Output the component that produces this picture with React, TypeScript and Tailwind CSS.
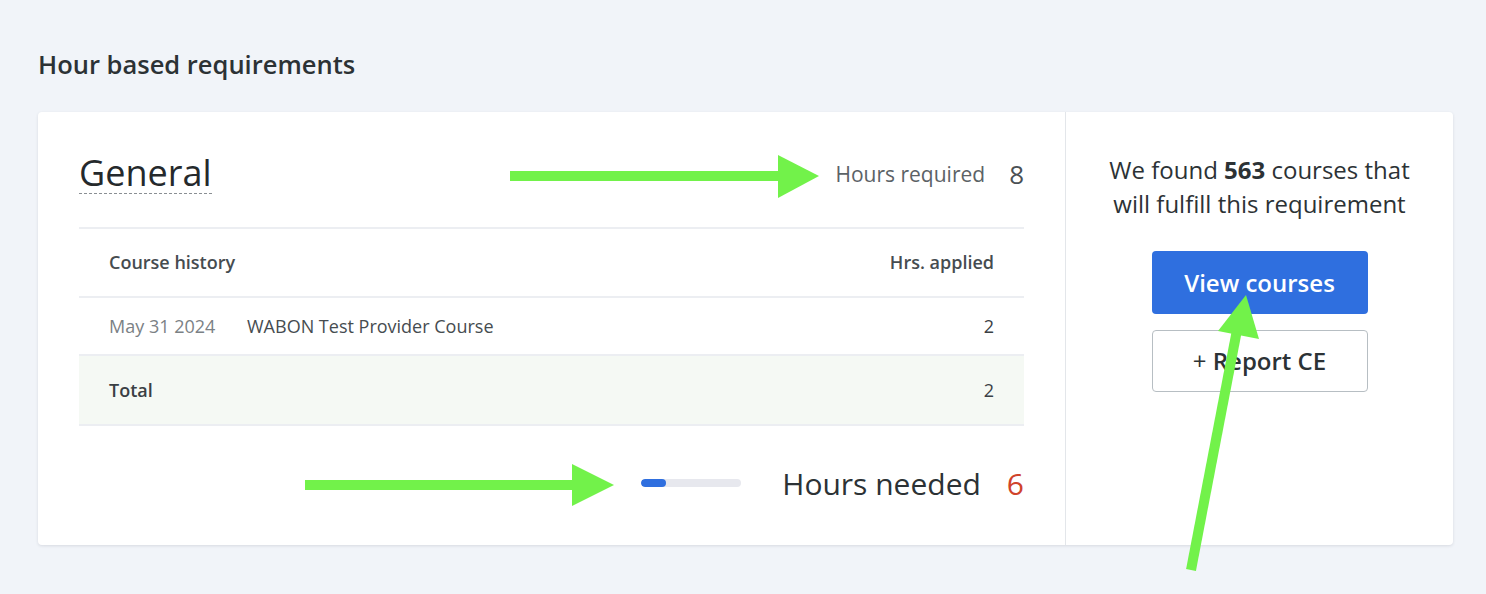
import React from "react";

const rows = [{ date: "May 31 2024", title: "WABON Test Provider Course", hours: 2 }];

function Arrows() {
  const green = "#72f24a";
  return (
    <svg
      className="pointer-events-none absolute left-0 top-0"
      width={1486}
      height={594}
      viewBox="0 0 1486 594"
    >
      <rect x={510} y={171} width={270} height={10} fill={green} />
      <polygon points="778,155 819,176 778,198" fill={green} />
      <rect x={305} y={480} width={269} height={10} fill={green} />
      <polygon points="572,464 614,485 572,506" fill={green} />
      <line x1={1191} y1={570} x2={1237} y2={330} stroke={green} strokeWidth={10} />
      <polygon points="1246,295 1218,331 1259,339" fill={green} />
    </svg>
  );
}

export default function App() {
  const required = 8;
  const applied = rows.reduce((sum, r) => sum + r.hours, 0);
  const needed = required - applied;

  return (
    <div
      className="relative h-[594px] w-[1486px] overflow-hidden bg-[#f1f4f9] px-[38px] pt-[46px]"
      style={{ fontFamily: '"Open Sans", sans-serif' }}
    >
      <h2 className="text-[25.5px] leading-[36px] font-semibold text-[#2c3235]">Hour based requirements</h2>

      <section className="mt-[30px] flex h-[433px] w-[1415px] rounded-[4px] bg-white shadow-[0_1px_3px_rgba(30,40,60,0.12)]">
        <div className="w-[1028px] border-r border-[#e3e6ea] px-[41px] pt-[40px]">
          <header className="flex h-[75px] items-start justify-between">
            <h3 className="border-b-[1.5px] border-dashed border-[#8a8f93] text-[36px] leading-[41px] text-[#25292c]">
              General
            </h3>
            <div className="flex items-center gap-[24px] pt-[3px]">
              <span className="text-[21px] text-[#5c6266]">Hours required</span>
              <span className="text-[26px] text-[#4a5054]">{required}</span>
            </div>
          </header>

          <div className="border-t-2 border-[#eceef2]">
            <div className="flex h-[67px] items-center justify-between px-[30px] text-[18px] font-semibold text-[#464c50]">
              <span>Course history</span>
              <span>Hrs. applied</span>
            </div>
            {rows.map((r) => (
              <div
                key={r.title}
                className="flex h-[58px] items-center border-t-2 border-[#eceef2] px-[30px] text-[18px]"
              >
                <span className="w-[138px] text-[#7b8185]">{r.date}</span>
                <span className="flex-1 text-[#464c50]">{r.title}</span>
                <span className="text-[#3a4044]">{r.hours}</span>
              </div>
            ))}
            <div className="flex h-[72px] items-center justify-between border-y-2 border-[#eceef2] bg-[#f5f9f4] px-[30px] text-[18px] text-[#3a4044]">
              <span className="font-semibold">Total</span>
              <span>{applied}</span>
            </div>
          </div>

          <div className="flex h-[116px] items-center justify-end pb-[2px]">
            <div className="mr-[41px] h-[8px] w-[100px] overflow-hidden rounded-full bg-[#e7e8ee]">
              <div className="h-full rounded-full bg-[#2f6fdf]" style={{ width: `${(applied / required) * 100}%` }} />
            </div>
            <span className="text-[30px] text-[#2c3235]">Hours needed</span>
            <span className="ml-[26px] text-[30px] text-[#d0432b]">{needed}</span>
          </div>
        </div>

        <div className="flex flex-1 flex-col items-center pt-[41px]">
          <p className="text-center text-[24px] leading-[34px] text-[#2c3235]">
            We found <strong className="font-bold">563</strong> courses that
            <br />
            will fulfill this requirement
          </p>
          <button className="mt-[30px] h-[63px] w-[216px] rounded-[4px] bg-[#2f6fdf] text-[24px] font-semibold text-white">
            View courses
          </button>
          <button className="mt-[16px] h-[62px] w-[216px] rounded-[4px] border border-[#b7bec3] bg-white text-[24px] font-semibold text-[#2c3235]">
            <span className="font-normal">+</span> Report CE
          </button>
        </div>
      </section>

      <Arrows />
    </div>
  );
}
